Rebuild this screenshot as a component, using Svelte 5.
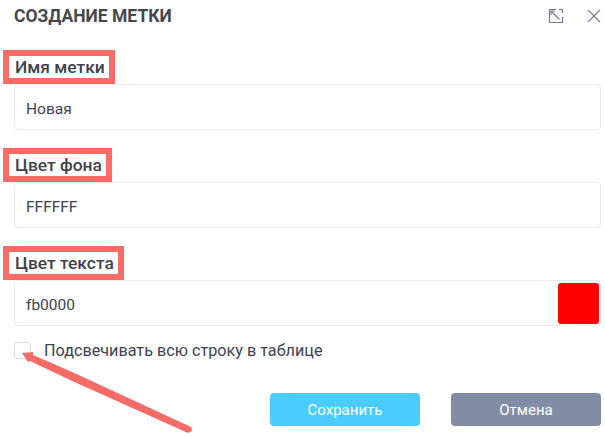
<script>
  const fields = [
    { label: 'Имя метки', value: 'Новая' },
    { label: 'Цвет фона', value: 'FFFFFF' },
    { label: 'Цвет текста', value: 'fb0000', swatch: '#ff0000' },
  ];
  let highlight = $state(false);
</script>

<div class="dialog">
  <header class="head">
    <h1>Создание метки</h1>
    <div class="tools">
      <svg width="14" height="14" viewBox="0 0 14 14" fill="none" stroke="#6f7a94" stroke-width="1.1">
        <path d="M7 .5H.5V13.5H13.5V8M10 .5H13.5V4" />
        <path d="M2 2L10.5 10.5M2 2V6M2 2H6" />
      </svg>
      <svg width="14" height="14" viewBox="0 0 14 14" fill="none" stroke="#6f7a94" stroke-width="1.1">
        <path d="M1 1L13 13M13 1L1 13" />
      </svg>
    </div>
  </header>

  {#each fields as f}
    <div class="field">
      <label class="label" for={f.label}>{f.label}</label>
      <div class="input">
        <input id={f.label} value={f.value} />
        {#if f.swatch}<span class="swatch" style:background={f.swatch}></span>{/if}
      </div>
    </div>
  {/each}

  <label class="check">
    <input type="checkbox" bind:checked={highlight} />
    <span>Подсвечивать всю строку в таблице</span>
  </label>

  <footer class="actions">
    <button class="save">Сохранить</button>
    <button class="cancel">Отмена</button>
  </footer>

  <svg class="arrow" width="200" height="100" viewBox="0 0 200 100">
    <polygon points="22,13 33,12 33,15 70,31 191,87 192,91 188,93 70,40 30,21 28,22" fill="#f56b67" />
  </svg>
</div>

<style>
  :global(body) { background: #fff; }
  .dialog {
    position: relative;
    width: 605px; height: 437px;
    box-sizing: border-box;
    padding: 0 4px 0 14px;
    font-family: Roboto, sans-serif;
    color: #3d4354;
    overflow: hidden;
  }
  .head {
    display: flex; align-items: center; justify-content: space-between;
    height: 31px;
  }
  h1 {
    margin: 0;
    font-size: 17.5px; font-weight: 700;
    text-transform: uppercase;
    color: #45484f;
  }
  .tools { display: flex; gap: 24px; }
  .field { margin-bottom: 18px; }
  .field:first-of-type { margin-top: 19px; }
  .label {
    display: block;
    box-sizing: border-box;
    width: max-content;
    height: 34px;
    margin-left: -11px;
    padding: 0 4px 0 6px;
    border: 6px solid #fa6a66;
    font-size: 17.4px; font-weight: 500;
    line-height: 22px;
    color: #3f434c;
  }
  .input {
    display: flex; align-items: center;
    height: 46px;
    box-sizing: border-box;
    border: 1px solid #e9ebef;
    border-radius: 4px;
    padding: 0 1px 0 11px;
  }
  .input input {
    flex: 1; min-width: 0;
    border: none; outline: none; padding: 3px 0 0;
    font: 400 15.5px Roboto, sans-serif;
    color: #3d4354;
    background: none;
  }
  .swatch {
    width: 41px; height: 41px;
    border-radius: 3px;
  }
  .check {
    display: flex; align-items: center; gap: 13px;
    margin-top: -3px;
    height: 19px;
    font-size: 16.2px;
    color: #3d4354;
  }
  .check input {
    appearance: none;
    width: 17px; height: 17px;
    margin: 0;
    border: 1px solid #d5dbe2;
    border-radius: 4px;
    background: #fff;
  }
  .actions {
    display: flex; justify-content: flex-end; gap: 31px;
    margin-top: 33px;
  }
  button {
    width: 150px; height: 33px;
    border: none; border-radius: 4px;
    font: 400 15px Roboto, sans-serif;
    color: #fff;
  }
  .save { background: #4accff; }
  .cancel { background: #838ca5; }
  .arrow {
    position: absolute;
    left: 0; top: 340px;
    pointer-events: none;
  }
</style>
